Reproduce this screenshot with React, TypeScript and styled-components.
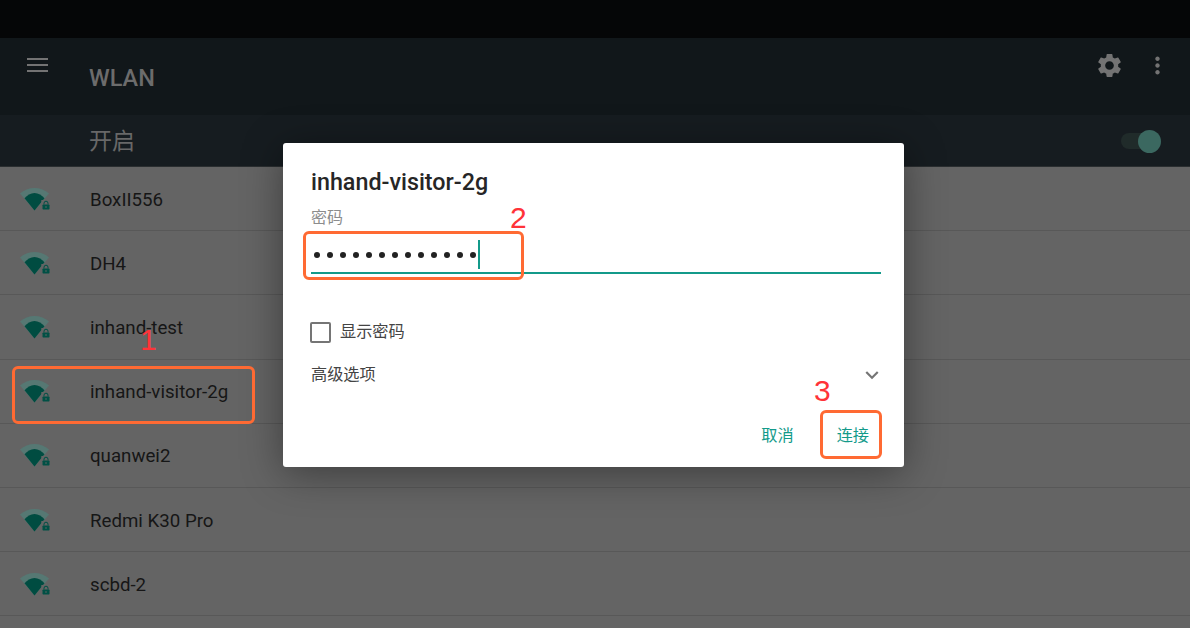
import * as React from "react";
import styled, { createGlobalStyle } from "styled-components";
import { MdExpandMore, MdMoreVert, MdSettings } from "react-icons/md";

const GlobalStyle = createGlobalStyle`
  html, body {
    margin: 0;
    padding: 0;
    background: #646464;
    overflow: hidden;
  }
  body {
    font-family: Roboto, "Noto Sans CJK SC", sans-serif;
  }
`;

const Screen = styled.main`
  position: relative;
  width: 1190px;
  height: 628px;
  overflow: hidden;
  display: flex;
  flex-direction: column;
`;

const StatusBar = styled.div`
  height: 38px;
  background: #050607;
`;

const AppBar = styled.header`
  height: 77px;
  box-sizing: border-box;
  background: #11171a;
  display: flex;
  align-items: flex-start;
  color: #737373;
`;

const MenuButton = styled.div`
  width: 75px;
  height: 54px;
  display: flex;
  align-items: center;
  justify-content: center;
`;

const Title = styled.h1`
  flex: 1;
  margin: 0 0 0 14px;
  padding-top: 25px;
  font-size: 23.5px;
  line-height: 30px;
  font-weight: 500;
  color: #6c6c6c;
`;

const ActionIcon = styled.div<{ $w: number; $size: number }>`
  width: ${(p) => p.$w}px;
  height: 54px;
  display: flex;
  align-items: center;
  justify-content: center;
  font-size: ${(p) => p.$size}px;
`;

const SwitchBar = styled.div`
  height: 52px;
  box-sizing: border-box;
  background: #161c20;
  border-bottom: 1px solid #2a2e30;
  padding: 0 29px 0 89px;
  display: flex;
  align-items: center;
  justify-content: space-between;
`;

const SwitchLabel = styled.span`
  margin-bottom: 4px;
  font-size: 23px;
  color: #686868;
`;

const Toggle = styled.div`
  position: relative;
  width: 34px;
  height: 16px;
  margin-right: 6px;
  border-radius: 8px;
  background: #202b2a;
`;

const Thumb = styled.div`
  position: absolute;
  right: -6px;
  top: -3px;
  width: 23px;
  height: 23px;
  border-radius: 50%;
  background: #3b6860;
`;

const NetworkList = styled.ul`
  list-style: none;
  margin: 0;
  padding: 0;
  flex: 1;
  background: #646464;
`;

const Row = styled.li`
  height: 64.2px;
  box-sizing: border-box;
  border-bottom: 1px solid #585858;
  display: flex;
  align-items: center;
  padding-left: 19px;
`;

const RowName = styled.span`
  margin-left: 39px;
  padding-top: 2px;
  font-size: 18.7px;
  color: #161616;
`;

const Dialog = styled.section`
  position: absolute;
  left: 283px;
  top: 143px;
  width: 621px;
  height: 324px;
  box-sizing: border-box;
  padding: 23px 23px 0 28px;
  background: #ffffff;
  border-radius: 3px;
  box-shadow: 0 6px 40px rgba(0, 0, 0, 0.4);
  display: flex;
  flex-direction: column;
`;

const DialogTitle = styled.h2`
  margin: 0;
  font-size: 23.3px;
  line-height: 32px;
  font-weight: 500;
  color: #262626;
`;

const FieldLabel = styled.label`
  margin-top: 10px;
  font-size: 16px;
  line-height: 20px;
  color: #8c8c8c;
`;

const PasswordField = styled.div`
  height: 45px;
  box-sizing: border-box;
  margin-top: 1px;
  border-bottom: 2px solid #139a8a;
  display: flex;
  align-items: center;
  padding: 8px 0 0 3px;
`;

const Dot = styled.span`
  width: 6px;
  height: 6px;
  margin-right: 7px;
  flex: none;
  border-radius: 50%;
  background: #222222;
`;

const Caret = styled.span`
  width: 2px;
  height: 29px;
  margin-left: -5px;
  background: #139a8a;
`;

const CheckRow = styled.div`
  margin-top: 47px;
  display: flex;
  align-items: center;
  gap: 9px;
  font-size: 16.2px;
  line-height: 22px;
  color: #444444;
`;

const CheckBox = styled.span`
  width: 21px;
  height: 21px;
  margin-left: -1px;
  box-sizing: border-box;
  border: 2px solid #757575;
  border-radius: 2px;
`;

const AdvancedRow = styled.div`
  margin-top: 19px;
  display: flex;
  align-items: center;
  justify-content: space-between;
  font-size: 16.2px;
  line-height: 22px;
  color: #444444;
`;

const Chevron = styled.span`
  display: flex;
  margin-right: -4px;
  font-size: 26px;
  color: #757575;
`;

const Actions = styled.div`
  margin-top: 37px;
  display: flex;
  justify-content: flex-end;
  gap: 43px;
  padding-right: 12px;
`;

const ActionText = styled.button`
  border: 0;
  padding: 0;
  background: none;
  font-family: inherit;
  font-size: 16.2px;
  line-height: 22px;
  color: #139a8a;
`;

const Callout = styled.div<{ $x: number; $y: number; $w: number; $h: number }>`
  position: absolute;
  left: ${(p) => p.$x}px;
  top: ${(p) => p.$y}px;
  width: ${(p) => p.$w}px;
  height: ${(p) => p.$h}px;
  box-sizing: border-box;
  border: 3px solid #ff6a33;
  border-radius: 6px;
`;

const StepNumber = styled.span<{ $x: number; $y: number }>`
  position: absolute;
  left: ${(p) => p.$x}px;
  top: ${(p) => p.$y}px;
  font-family: "Liberation Sans", sans-serif;
  font-size: 30px;
  line-height: 30px;
  color: #ff3338;
`;

const MenuIcon = () => (
  <svg width="21" height="14" viewBox="0 0 21 14" aria-hidden="true">
    <rect y="0" width="21" height="2" fill="currentColor" />
    <rect y="6" width="21" height="2" fill="currentColor" />
    <rect y="12" width="21" height="2" fill="currentColor" />
  </svg>
);

const WifiIcon = () => (
  <svg width="32" height="26" viewBox="0 0 32 26" aria-hidden="true">
    <path d="M1 7.500C5 4 10 2 15.500 2S26 4 30 7.500L15.500 24.500Z" fill="#567873" />
    <path d="M5.500 12.300C8.200 9.300 11.700 7 15.500 7s7.300 2.300 10 5.300L15.500 24.500Z" fill="#004c41" />
    <path d="M22.300 14h9v10h-9z" fill="#646464" />
    <path d="M25 18.500v-1.300a2 2 0 0 1 4 0v1.300" fill="none" stroke="#005045" strokeWidth="1" />
    <rect x="23.500" y="18.500" width="7" height="5" rx="0.700" fill="#005045" />
    <circle cx="27" cy="21" r="0.800" fill="#646464" />
  </svg>
);

const networks = [
  "BoxII556",
  "DH4",
  "inhand-test",
  "inhand-visitor-2g",
  "quanwei2",
  "Redmi K30 Pro",
  "scbd-2",
];

const App = () => {
  return (
    <Screen>
      <GlobalStyle />
      <StatusBar />
      <AppBar>
        <MenuButton>
          <MenuIcon />
        </MenuButton>
        <Title>WLAN</Title>
        <ActionIcon $w={30} $size={29}>
          <MdSettings />
        </ActionIcon>
        <ActionIcon $w={66} $size={27}>
          <MdMoreVert />
        </ActionIcon>
      </AppBar>
      <SwitchBar>
        <SwitchLabel>开启</SwitchLabel>
        <Toggle>
          <Thumb />
        </Toggle>
      </SwitchBar>
      <NetworkList>
        {networks.map((name) => (
          <Row key={name}>
            <WifiIcon />
            <RowName>{name}</RowName>
          </Row>
        ))}
      </NetworkList>
      <Dialog>
        <DialogTitle>inhand-visitor-2g</DialogTitle>
        <FieldLabel>密码</FieldLabel>
        <PasswordField>
          {Array.from({ length: 13 }).map((_, i) => (
            <Dot key={i} />
          ))}
          <Caret />
        </PasswordField>
        <CheckRow>
          <CheckBox />
          显示密码
        </CheckRow>
        <AdvancedRow>
          高级选项
          <Chevron>
            <MdExpandMore />
          </Chevron>
        </AdvancedRow>
        <Actions>
          <ActionText>取消</ActionText>
          <ActionText>连接</ActionText>
        </Actions>
      </Dialog>
      <Callout $x={12} $y={366} $w={243} $h={58} />
      <Callout $x={303} $y={231} $w={221} $h={49} />
      <Callout $x={820} $y={410} $w={62} $h={49} />
      <StepNumber $x={140} $y={325}>1</StepNumber>
      <StepNumber $x={510} $y={203}>2</StepNumber>
      <StepNumber $x={814} $y={376}>3</StepNumber>
    </Screen>
  );
};

export default App;
